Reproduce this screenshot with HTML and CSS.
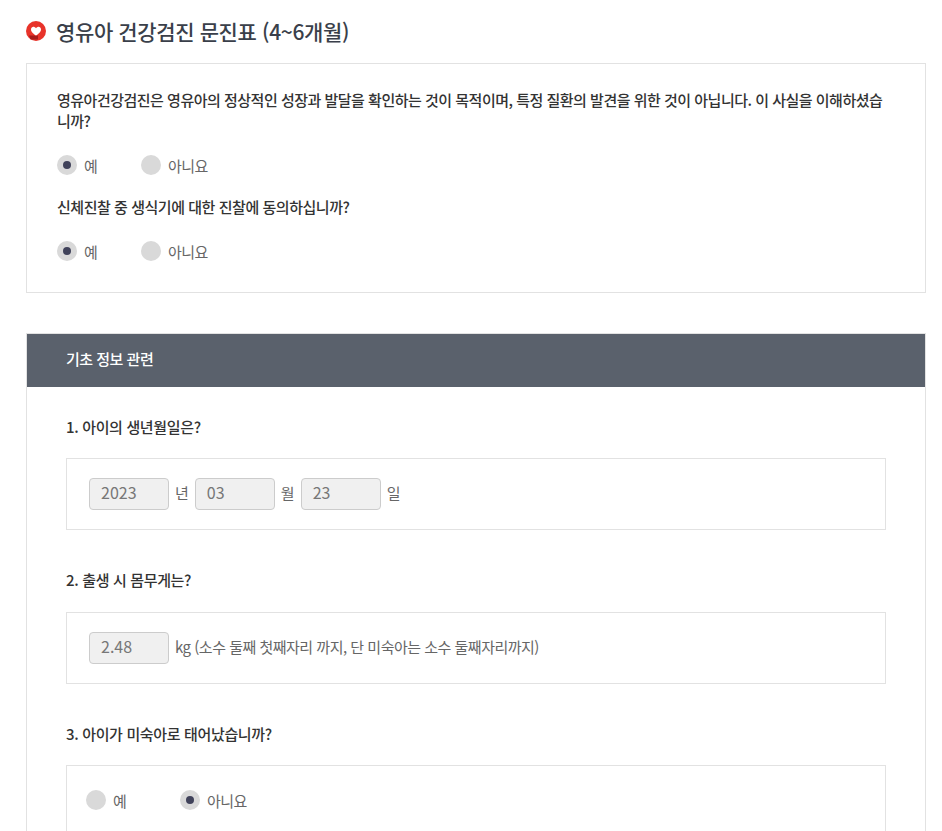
FILE: index.html
```html
<!DOCTYPE html>
<html lang="ko">
<head>
<meta charset="utf-8">
<title>영유아 건강검진 문진표</title>
<link rel="stylesheet" href="styles.css">
</head>
<body>
<main class="page">
  <h1 class="title">
    <svg class="logo" width="22" height="20" viewBox="0 0 22 20"><circle cx="10" cy="10" r="10" fill="#e8332a"/><path d="M3 14.5 H12 V18.5 H4.5 Z" fill="#a81a1a"/><path d="M10 14.5 C6.2 11.8 5 10.2 5 8.4 C5 6.4 6.9 5.4 8.4 6 C9.1 6.3 9.7 6.8 10 7.3 C10.3 6.8 10.9 6.3 11.6 6 C13.1 5.4 15 6.4 15 8.4 C15 10.2 13.8 11.8 10 14.5 Z" fill="#fff"/></svg>
    <span>영유아 건강검진 문진표 (4~6개월)</span>
  </h1>
  <section class="consent">
    <p class="ask">영유아건강검진은 영유아의 정상적인 성장과 발달을 확인하는 것이 목적이며, 특정 질환의 발견을 위한 것이 아닙니다. 이 사실을 이해하셨습니까?</p>
    <div class="radios r1">
      <label class="radio"><i class="dot on"></i>예</label>
      <label class="radio"><i class="dot"></i>아니요</label>
    </div>
    <p class="ask ask-second">신체진찰 중 생식기에 대한 진찰에 동의하십니까?</p>
    <div class="radios r2">
      <label class="radio"><i class="dot on"></i>예</label>
      <label class="radio"><i class="dot"></i>아니요</label>
    </div>
  </section>
  <section class="form">
    <h2 class="band">기초 정보 관련</h2>
    <div class="body">
      <h3 class="q">1. 아이의 생년월일은?</h3>
      <div class="box fields">
        <span class="input">2023</span><span class="unit">년</span>
        <span class="input">03</span><span class="unit">월</span>
        <span class="input">23</span><span class="unit">일</span>
      </div>
      <h3 class="q">2. 출생 시 몸무게는?</h3>
      <div class="box fields">
        <span class="input">2.48</span><span class="unit">kg (소수 둘째 첫째자리 까지, 단 미숙아는 소수 둘째자리까지)</span>
      </div>
      <h3 class="q">3. 아이가 미숙아로 태어났습니까?</h3>
      <div class="box radios-box">
        <label class="radio"><i class="dot"></i>예</label>
        <label class="radio"><i class="dot on"></i>아니요</label>
      </div>
    </div>
  </section>
</main>
</body>
</html>
```
FILE: styles.css
```css
* { box-sizing: border-box; }
html, body { margin: 0; padding: 0; height: 831px; overflow: hidden; background: #fff; }
body { font-family: "Noto Sans CJK KR", "Noto Sans", sans-serif; color: #333; }
.page { padding: 0 16px 0 26px; }
.title { display: flex; align-items: center; gap: 8px; height: 63px; padding-bottom: 2px; margin: 0; font-size: 21px; font-weight: 500; color: #3a3f4a; letter-spacing: -0.37px; }
.logo { flex: none; }
.consent { height: 230px; border: 1px solid #e2e2e2; padding: 25px 30px 0; }
.ask { margin: 0; font-size: 15px; font-weight: 500; line-height: 21px; color: #333; letter-spacing: -0.5px; }
.radios { display: flex; gap: 43px; }
.r1 { margin-top: 24px; }
.ask-second { margin-top: 21px; letter-spacing: -0.46px; }
.r2 { margin-top: 24px; }
.radio { display: flex; align-items: center; gap: 7px; height: 20px; font-size: 15px; line-height: 19px; color: #666; width: 41px; white-space: nowrap; letter-spacing: -0.5px; }
.dot { width: 20px; height: 20px; border-radius: 50%; background: #d9d9d9; display: flex; align-items: center; justify-content: center; flex: none; }
.dot.on::after { content: ""; width: 8px; height: 8px; border-radius: 50%; background: #40425a; }
.form { margin-top: 40px; border: 1px solid #e2e2e2; height: 520px; }
.band { margin: 0; height: 53px; background: #5a616c; color: #fff; font-size: 15px; font-weight: 500; line-height: 50px; padding-left: 39px; letter-spacing: -0.5px; }
.body { padding: 0 39px; }
.q { margin: 0; font-size: 15px; font-weight: 500; line-height: 24px; color: #333; letter-spacing: -0.35px; padding-top: 27.5px; height: 71px; }
.box { border: 1px solid #e2e2e2; }
.fields { height: 72px; display: flex; align-items: center; padding-left: 22px; margin-bottom: 10.5px; font-size: 15px; color: #666; }
.input { width: 80px; height: 32px; background: #f0f0f0; border: 1px solid #ccc; border-radius: 4px; padding-left: 11px; font-size: 16px; line-height: 27px; color: #777; }
.unit { margin: 0 6.5px 0 6px; white-space: nowrap; letter-spacing: -0.5px; line-height: 28px; padding-bottom: 2px; }
.radios-box { height: 80px; display: flex; align-items: flex-start; padding: 24px 0 0 19px; gap: 53px; }
```
